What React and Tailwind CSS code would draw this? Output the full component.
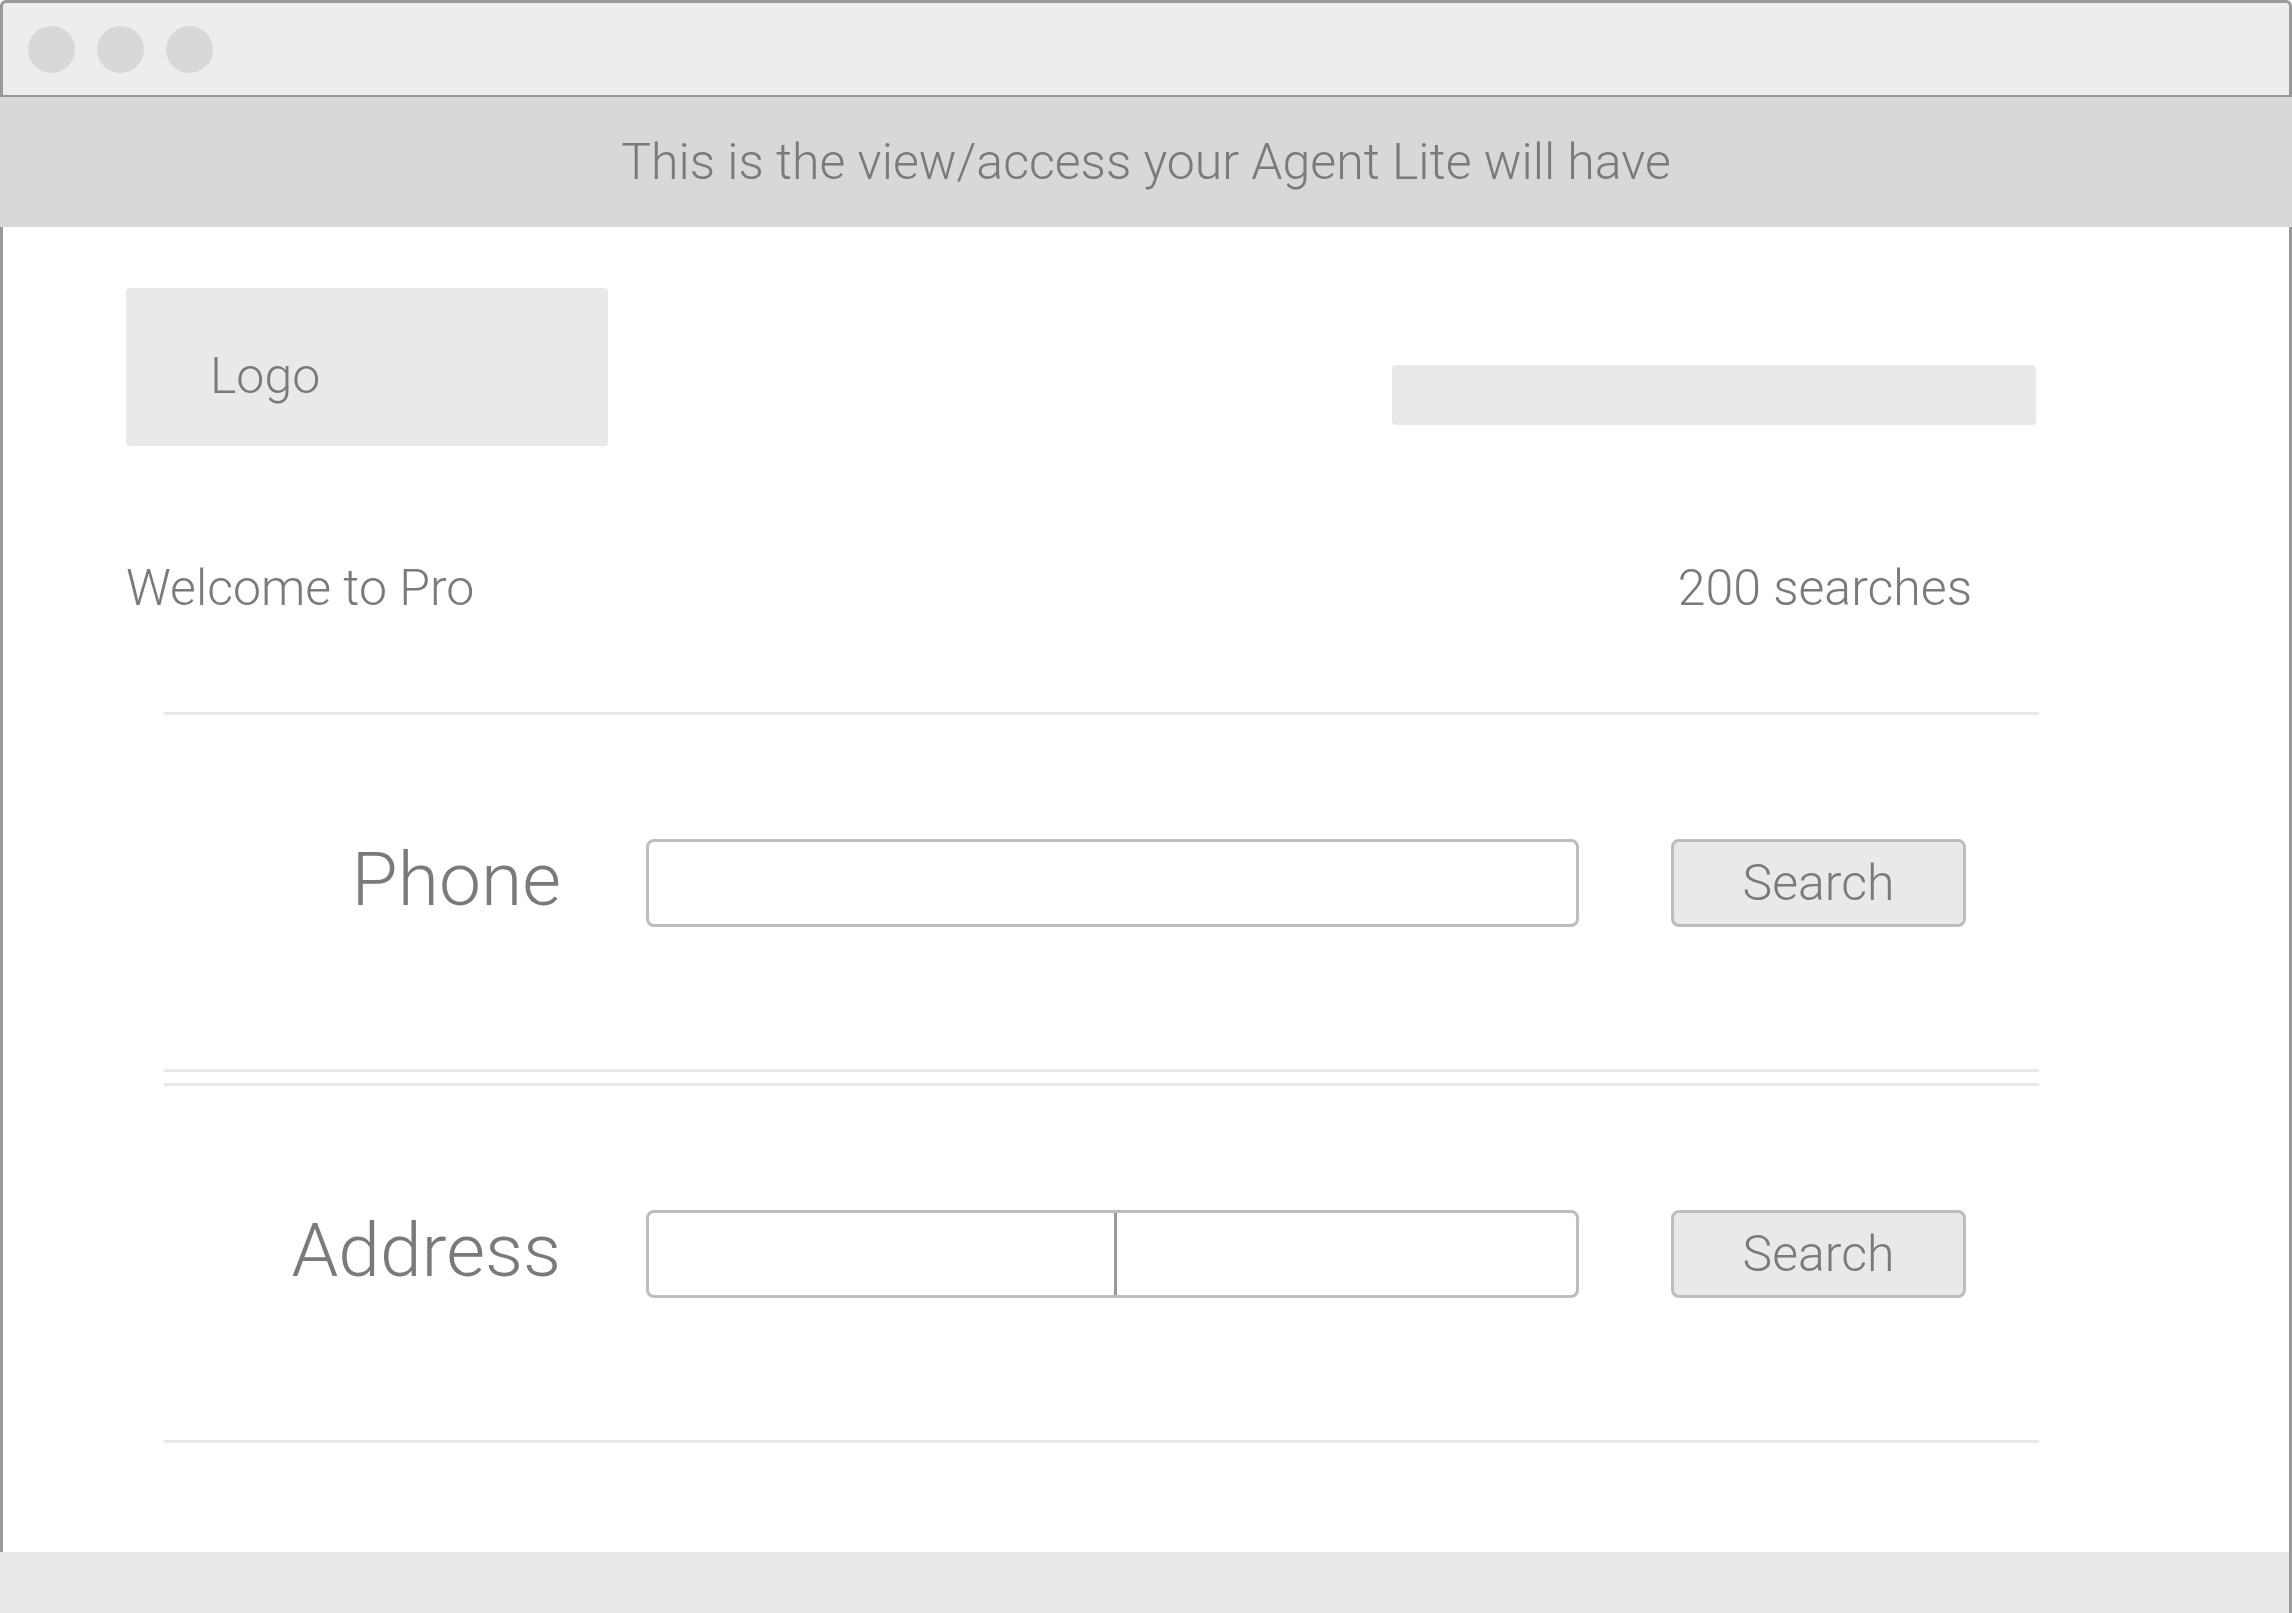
import React from 'react';

const SearchButton = () => (
  <button className="w-[295px] h-[88px] ml-[92px] bg-[#e8eaea] border-[3px] border-[#bdbdbd] rounded-[8px] text-[50px] font-light text-[#7a7a7a] leading-none">
    Search
  </button>
);

const App = () => {
  return (
    <div className="w-[2292px] h-[1613px] flex flex-col bg-white font-[Roboto,sans-serif] text-[#7a7a7a]">
      {/* window chrome */}
      <div className="h-[97px] shrink-0 flex items-center gap-[22px] pl-[25px] bg-[#ededed] border-t-[3px] border-x-[3px] border-b-2 border-[#999999] rounded-t-[6px]">
        <div className="w-[47px] h-[47px] rounded-full bg-[#d8d8d8]" />
        <div className="w-[47px] h-[47px] rounded-full bg-[#d8d8d8]" />
        <div className="w-[47px] h-[47px] rounded-full bg-[#d8d8d8]" />
      </div>

      <div className="h-[130px] shrink-0 flex items-center justify-center bg-[#d8d8d8]">
        <p className="text-[50px] font-light leading-none">This is the view/access your Agent Lite will have</p>
      </div>

      <div className="flex-1 border-x-[3px] border-[#999999]">
        {/* header */}
        <div className="flex justify-between items-start pt-[61px] pl-[123px] pr-[253px]">
          <div className="w-[482px] h-[158px] flex items-center pl-[84px] pt-[18px] bg-[#e8eaea] rounded-[4px]">
            <span className="text-[50px] font-light leading-none">Logo</span>
          </div>
          <div className="w-[644px] h-[60px] mt-[77px] bg-[#e8eaea] rounded-[4px]" />
        </div>

        <div className="flex justify-between items-center h-[56px] mt-[114px] pl-[123px] pr-[317px]">
          <span className="text-[50px] font-light">Welcome to Pro</span>
          <span className="text-[50px] font-light">200 searches</span>
        </div>

        {/* phone */}
        <div className="ml-[161px] mr-[250px] mt-[96px] border-y-[3px] border-[#e9e9e9] pt-[124px] pb-[142px]">
          <div className="flex items-center h-[88px]">
            <label className="w-[397px] pb-[8px] text-right text-[75px] font-light leading-none">Phone</label>
            <div className="w-[933px] h-[88px] ml-[85px] border-[3px] border-[#bdbdbd] rounded-[8px]" />
            <SearchButton />
          </div>
        </div>

        {/* address */}
        <div className="ml-[161px] mr-[250px] mt-[11px] border-y-[3px] border-[#e9e9e9] pt-[124px] pb-[142px]">
          <div className="flex items-center h-[88px]">
            <label className="w-[397px] pb-[8px] text-right text-[75px] font-light leading-none">Address</label>
            <div className="w-[933px] h-[88px] ml-[85px] flex border-[3px] border-[#bdbdbd] rounded-[8px]">
              <div className="w-[468px] h-full border-r-[3px] border-[#999999]" />
              <div className="flex-1" />
            </div>
            <SearchButton />
          </div>
        </div>
      </div>

      <div className="h-[61px] shrink-0 bg-[#e8eaea] border-r-[3px] border-[#999999]" />
    </div>
  );
};

export default App;
